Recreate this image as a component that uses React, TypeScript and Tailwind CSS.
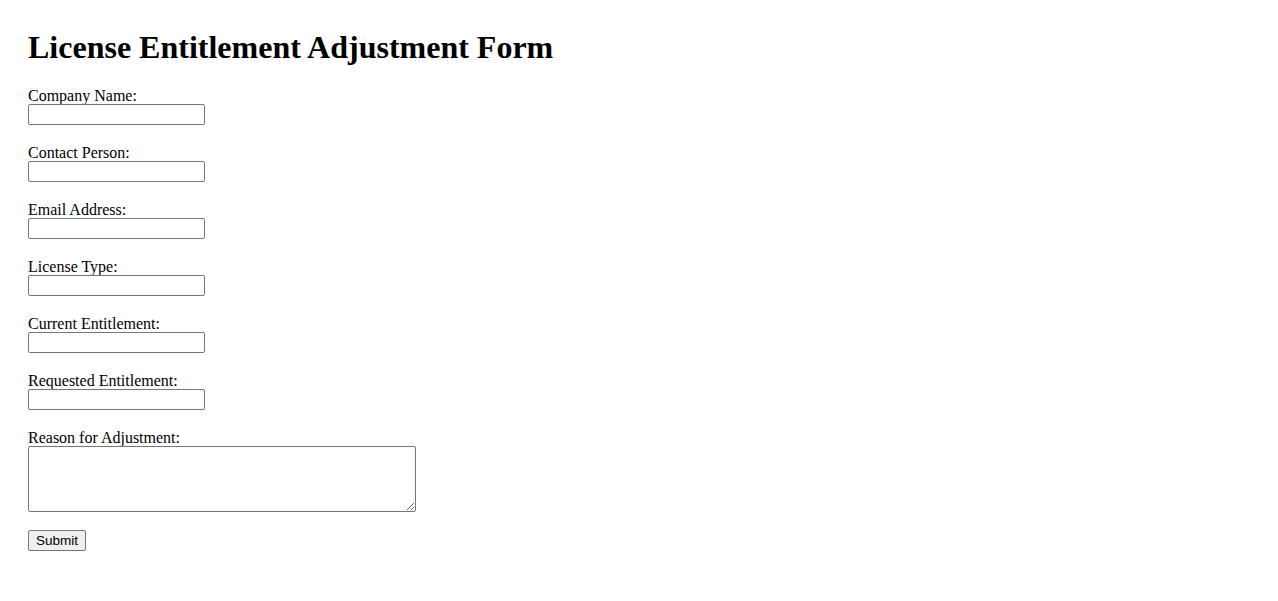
import React from 'react';

const fields = [
  'Company Name:',
  'Contact Person:',
  'Email Address:',
  'License Type:',
  'Current Entitlement:',
  'Requested Entitlement:',
];

export default function App() {
  return (
    <div className="min-h-screen bg-white px-[28px] pt-[29px] text-black font-['Liberation_Serif',serif]">
      <h1 className="text-[32px] font-bold leading-[37px] mb-[19px]">
        License Entitlement Adjustment Form
      </h1>
      <form className="flex flex-col items-start" onSubmit={e => e.preventDefault()}>
        {fields.map(label => (
          <div key={label} className="flex flex-col items-start mb-[17px]">
            <label className="text-[16px] leading-[17px] pt-[2px]">{label}</label>
            <input
              type="text"
              className="w-[177px] h-[21px] border border-[#767676] rounded-[2px] px-[2px] text-[13px] font-['Liberation_Sans',sans-serif] bg-white"
            />
          </div>
        ))}
        <div className="flex flex-col items-start mb-[18px]">
          <label className="text-[16px] leading-[17px] pt-[2px]">Reason for Adjustment:</label>
          <textarea className="w-[388px] h-[66px] border border-[#767676] rounded-[2px] px-[2px] text-[13px] font-['Liberation_Mono',monospace] bg-white" />
        </div>
        <button
          type="submit"
          className="w-[58px] h-[21px] border border-[#767676] rounded-[2px] bg-[#efefef] text-[13.5px] leading-none font-['Liberation_Sans',sans-serif] text-black"
        >
          Submit
        </button>
      </form>
    </div>
  );
}
